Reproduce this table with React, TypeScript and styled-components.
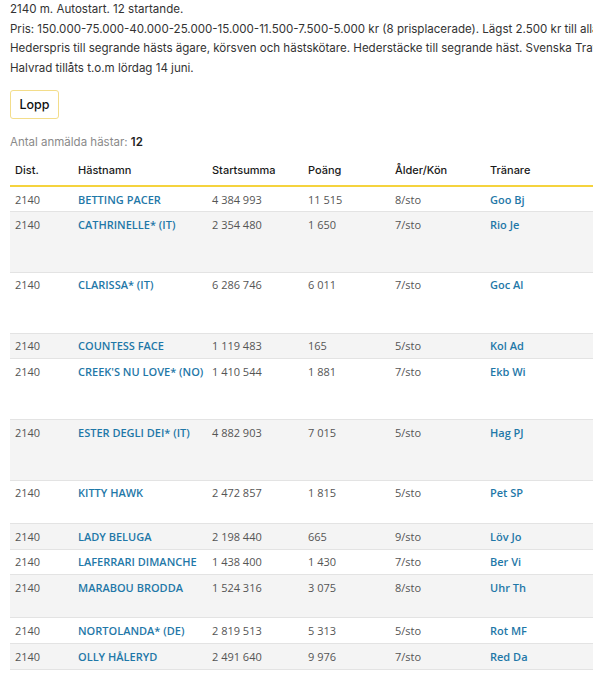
import React from "react";
import styled, { createGlobalStyle } from "styled-components";

const Global = createGlobalStyle`
  html, body { margin: 0; padding: 0; background: #fff; overflow: hidden; }
  body { font-family: "Inter", "Liberation Sans", sans-serif; }
`;

const Page = styled.div`
  width: 980px;
  padding: 0 10px;
  box-sizing: border-box;
`;

const Info = styled.p`
  margin: 0;
  font-family: "Inter", "Liberation Sans", sans-serif;
  font-size: 11.55px;
  line-height: 19.5px;
  color: #333;
  white-space: nowrap;
`;

const Button = styled.button`
  display: block;
  margin-top: 12px;
  width: 49px;
  height: 29px;
  padding: 0;
  background: #fff;
  border: 1px solid #f3dd8a;
  border-radius: 3px;
  font-family: "Inter", "Liberation Sans", sans-serif;
  font-size: 12.5px;
  font-weight: 450;
  color: #111;
`;

const Count = styled.div`
  margin-top: 15px;
  font-family: "Inter", "Liberation Sans", sans-serif;
  font-size: 11.5px;
  line-height: 17px;
  color: #8a8a8a;
  & b { color: #222; font-weight: 600; }
`;

const Table = styled.table`
  margin-top: 7px;
  width: 960px;
  border-collapse: collapse;
  table-layout: fixed;
`;

const HeadCell = styled.th<{ $w: number }>`
  box-sizing: border-box;
  width: ${(p) => p.$w}px;
  text-align: left;
  padding: 0 5px 3px;
  height: 28px;
  font-family: "Inter", "Liberation Sans", sans-serif;
  font-size: 11px;
  font-weight: 500;
  color: #1a1a1a;
  border-bottom: 2px solid #f5d33d;
`;

const Row = styled.tr<{ $striped: boolean; $lines: number }>`
  background: ${(p) => (p.$striped ? "#f4f4f4" : "#fff")};
  border-bottom: 1px solid #e3e3e3;
  height: ${(p) => 8 + p.$lines * 17.6}px;
`;

const Cell = styled.td`
  box-sizing: border-box;
  vertical-align: top;
  padding: 3.5px 5px 0;
  font-family: "Open Sans", "Liberation Sans", sans-serif;
  font-size: 11px;
  line-height: 17px;
  color: #555;
  white-space: nowrap;
`;

const Link = styled.a`
  color: #1f78a8;
  font-weight: 600;
  text-decoration: none;
`;

const cols = [
  { label: "Dist.", w: 63 },
  { label: "Hästnamn", w: 134 },
  { label: "Startsumma", w: 96 },
  { label: "Poäng", w: 87 },
  { label: "Ålder/Kön", w: 95 },
  { label: "Tränare", w: 120 },
  { label: "", w: 365 },
];

type Horse = [string, string, string, string, string, number];

const horses: Horse[] = [
  ["BETTING PACER", "4 384 993", "11 515", "8/sto", "Goo Bj", 1],
  ["CATHRINELLE* (IT)", "2 354 480", "1 650", "7/sto", "Rio Je", 3],
  ["CLARISSA* (IT)", "6 286 746", "6 011", "7/sto", "Goc Al", 3],
  ["COUNTESS FACE", "1 119 483", "165", "5/sto", "Kol Ad", 1],
  ["CREEK'S NU LOVE* (NO)", "1 410 544", "1 881", "7/sto", "Ekb Wi", 3],
  ["ESTER DEGLI DEI* (IT)", "4 882 903", "7 015", "5/sto", "Hag PJ", 3],
  ["KITTY HAWK", "2 472 857", "1 815", "5/sto", "Pet SP", 2],
  ["LADY BELUGA", "2 198 440", "665", "9/sto", "Löv Jo", 1],
  ["LAFERRARI DIMANCHE", "1 438 400", "1 430", "7/sto", "Ber Vi", 1],
  ["MARABOU BRODDA", "1 524 316", "3 075", "8/sto", "Uhr Th", 2],
  ["NORTOLANDA* (DE)", "2 819 513", "5 313", "5/sto", "Rot MF", 1],
  ["OLLY HÅLERYD", "2 491 640", "9 976", "7/sto", "Red Da", 1],
];

export default function App() {
  return (
    <Page>
      <Global />
      <Info>
        2140 m. Autostart. 12 startande.
        <br />
        Pris: 150.000-75.000-40.000-25.000-15.000-11.500-7.500-5.000 kr (8 prisplacerade). Lägst 2.500 kr till alla tävlande.
        <br />
        Hederspris till segrande hästs ägare, körsven och hästskötare. Hederstäcke till segrande häst. Svenska Travsportens
        <br />
        Halvrad tillåts t.o.m lördag 14 juni.
      </Info>
      <Button>Lopp</Button>
      <Count>
        Antal anmälda hästar: <b>12</b>
      </Count>
      <Table>
        <thead>
          <tr>
            {cols.map((c, i) => (
              <HeadCell key={i} $w={c.w}>
                {c.label}
              </HeadCell>
            ))}
          </tr>
        </thead>
        <tbody>
          {horses.map(([name, sum, pts, age, trainer, lines], i) => (
            <Row key={name} $striped={i % 2 === 1} $lines={lines}>
              <Cell>2140</Cell>
              <Cell>
                <Link href="#">{name}</Link>
              </Cell>
              <Cell>{sum}</Cell>
              <Cell>{pts}</Cell>
              <Cell>{age}</Cell>
              <Cell>
                <Link href="#">{trainer}</Link>
              </Cell>
              <Cell />
            </Row>
          ))}
        </tbody>
      </Table>
    </Page>
  );
}
